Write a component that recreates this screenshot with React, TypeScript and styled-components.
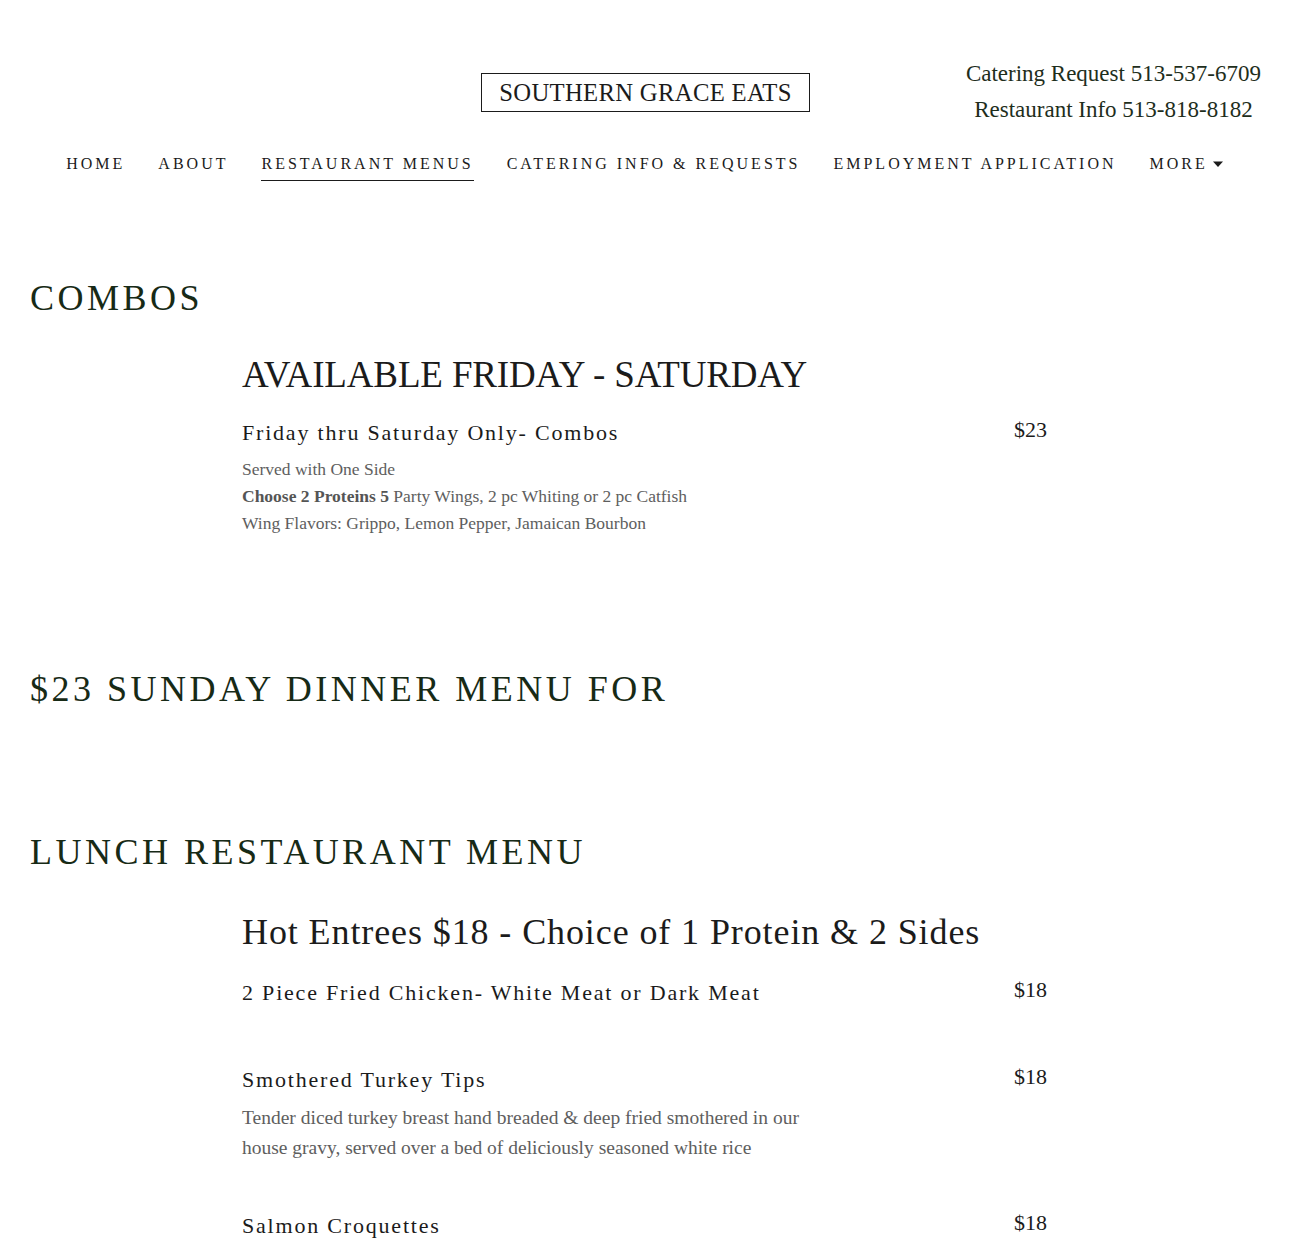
import React from "react";
import styled, { createGlobalStyle } from "styled-components";

const Global = createGlobalStyle`
  html, body { margin: 0; padding: 0; background: #fff; }
  body { font-family: "Liberation Serif", "DejaVu Serif", serif; color: #1b1b1b; }
  * { box-sizing: border-box; }
`;

const Page = styled.div`
  width: 1290px;
`;

const Header = styled.header`
  display: grid;
  grid-template-columns: 1fr auto 1fr;
  align-items: start;
  padding: 55px 29px 0 30px;
`;

const LogoBox = styled.div`
  grid-column: 2;
  margin-top: 18px;
  border: 1px solid #1b1b1b;
  padding: 4px 17px 3px;
  font-size: 24.7px;
  line-height: 30px;
  letter-spacing: 0.3px;
  color: #1b1b1b;
`;

const Contact = styled.div`
  grid-column: 3;
  justify-self: end;
  margin-top: 1px;
  text-align: center;
  color: #1e2e1c;
  font-size: 23px;
  line-height: 36px;
`;

const Nav = styled.nav`
  display: flex;
  justify-content: center;
  gap: 33px;
  margin-top: 27px;
`;

const NavItem = styled.a<{ $active?: boolean }>`
  font-size: 16px;
  letter-spacing: 3px;
  text-transform: uppercase;
  color: #1b1b1b;
  text-decoration: none;
  padding-bottom: 7px;
  border-bottom: 1px solid ${(p) => (p.$active ? "#1b1b1b" : "transparent")};
  display: flex;
  align-items: center;
`;

const Caret = styled.svg`
  margin-left: 4px;
`;

const Section = styled.section<{ $top: number }>`
  padding: ${(p) => p.$top}px 0 0 30px;
`;

const SectionTitle = styled.h2`
  margin: 0;
  font-weight: 400;
  font-size: 36px;
  line-height: 44px;
  letter-spacing: 3.5px;
  color: #172a16;
`;

const MenuBody = styled.div`
  margin-left: 212px;
  width: 805px;
`;

const Category = styled.h3<{ $size: number; $spacing: number }>`
  margin: 0;
  font-weight: 400;
  font-size: ${(p) => p.$size}px;
  line-height: 50px;
  letter-spacing: ${(p) => p.$spacing}px;
  color: #1b1b1b;
`;

const Item = styled.div<{ $gap: number }>`
  display: flex;
  justify-content: space-between;
  align-items: flex-start;
  margin-top: ${(p) => p.$gap}px;
`;

const ItemText = styled.div`
  max-width: 590px;
`;

const ItemName = styled.div`
  font-size: 22px;
  line-height: 30px;
  letter-spacing: 1.8px;
  color: #1b1b1b;
`;

const Price = styled.div`
  font-size: 22px;
  line-height: 30px;
  color: #1b1b1b;
  margin-top: -3px;
`;

const Desc = styled.p<{ $lh: number; $size: number }>`
  margin: 8px 0 0;
  font-size: ${(p) => p.$size}px;
  line-height: ${(p) => p.$lh}px;
  color: #5e5e5e;
  b { font-weight: 700; color: #555; }
`;

export default function App() {
  return (
    <Page>
      <Global />
      <Header>
        <LogoBox>SOUTHERN GRACE EATS</LogoBox>
        <Contact>
          <div>Catering Request 513-537-6709</div>
          <div>Restaurant Info 513-818-8182</div>
        </Contact>
      </Header>
      <Nav>
        <NavItem>Home</NavItem>
        <NavItem>About</NavItem>
        <NavItem $active>Restaurant Menus</NavItem>
        <NavItem>Catering Info &amp; Requests</NavItem>
        <NavItem>Employment Application</NavItem>
        <NavItem>
          More
          <Caret width="12" height="8" viewBox="0 0 12 8">
            <path d="M1 1.5 L11 1.5 L6 7 Z" fill="#1b1b1b" />
          </Caret>
        </NavItem>
      </Nav>

      <Section $top={95}>
        <SectionTitle>COMBOS</SectionTitle>
        <MenuBody>
          <Category $size={37} $spacing={-0.15} style={{ marginTop: 30 }}>
            AVAILABLE FRIDAY - SATURDAY
          </Category>
          <Item $gap={18}>
            <ItemText>
              <ItemName>Friday thru Saturday Only- Combos</ItemName>
              <Desc $size={17.5} $lh={27}>
                Served with One Side
                <br />
                <b>Choose 2 Proteins 5</b> Party Wings, 2 pc Whiting or 2 pc Catfish
                <br />
                Wing Flavors: Grippo, Lemon Pepper, Jamaican Bourbon
              </Desc>
            </ItemText>
            <Price>$23</Price>
          </Item>
        </MenuBody>
      </Section>

      <Section $top={130}>
        <SectionTitle>$23 SUNDAY DINNER MENU FOR</SectionTitle>
      </Section>

      <Section $top={119}>
        <SectionTitle>LUNCH RESTAURANT MENU</SectionTitle>
        <MenuBody>
          <Category $size={36} $spacing={0.9} style={{ marginTop: 33 }}>
            Hot Entrees $18 - Choice of 1 Protein &amp; 2 Sides
          </Category>
          <Item $gap={21}>
            <ItemText>
              <ItemName>2 Piece Fried Chicken- White Meat or Dark Meat</ItemName>
            </ItemText>
            <Price>$18</Price>
          </Item>
          <Item $gap={57}>
            <ItemText>
              <ItemName>Smothered Turkey Tips</ItemName>
              <Desc $size={19.5} $lh={30}>
                Tender diced turkey breast hand breaded &amp; deep fried smothered in our house gravy, served over a bed
                of deliciously seasoned white rice
              </Desc>
            </ItemText>
            <Price>$18</Price>
          </Item>
          <Item $gap={48}>
            <ItemText>
              <ItemName>Salmon Croquettes</ItemName>
            </ItemText>
            <Price>$18</Price>
          </Item>
        </MenuBody>
      </Section>
    </Page>
  );
}
